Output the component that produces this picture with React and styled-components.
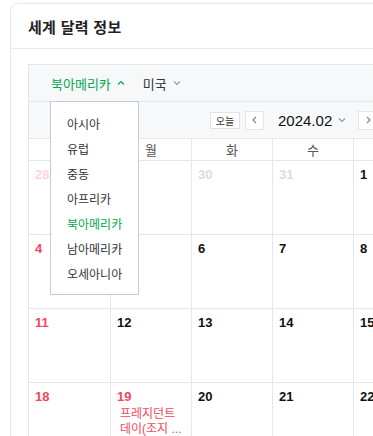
import React from "react";
import styled, { createGlobalStyle } from "styled-components";

const GlobalStyle = createGlobalStyle`
  html, body {
    margin: 0;
    padding: 0;
    background: #fff;
    overflow: hidden;
    font-family: "Liberation Sans", "Noto Sans CJK KR", sans-serif;
  }
`;

const Page = styled.div`
  width: 373px;
  height: 436px;
  padding: 3px 0 0 10px;
  box-sizing: border-box;
  overflow: hidden;
`;

const Card = styled.div`
  width: 420px;
  height: 460px;
  border: 1px solid #e5e6eb;
  border-radius: 8px;
  background: #fff;
  box-sizing: border-box;
`;

const CardHeader = styled.div`
  height: 45px;
  display: flex;
  align-items: center;
  padding-left: 17px;
  border-bottom: 1px solid #e9ebf0;
  box-sizing: border-box;
`;

const Title = styled.h2`
  margin: 0;
  font-size: 15px;
  font-weight: 700;
  color: #1d2129;
  letter-spacing: 0.3px;
`;

const CardBody = styled.div`
  padding: 15px 0 0 17px;
`;

const Calendar = styled.div`
  position: relative;
  border: 1px solid #e5e6eb;
  border-right: none;
  width: 600px;
`;

const RegionBar = styled.div`
  height: 36px;
  display: flex;
  align-items: center;
  gap: 18px;
  padding-left: 22px;
  background: #f7f8fa;
  border-bottom: 1px solid #e5e6eb;
`;

const RegionTab = styled.div`
  display: flex;
  align-items: center;
  gap: 6px;
  font-size: 13px;
  color: ${(p) => (p.$active ? "#00a84f" : "#333")};
`;

const DateBar = styled.div`
  height: 36px;
  display: flex;
  align-items: center;
  padding-left: 181px;
  background: #f7f8fa;
  border-bottom: 1px solid #e5e6eb;
`;

const TodayButton = styled.div`
  width: 30px;
  height: 17px;
  border: 1px solid #e0e2e7;
  background: #fff;
  font-size: 10px;
  color: #333;
  display: flex;
  align-items: center;
  justify-content: center;
  box-sizing: border-box;
  margin-right: 5px;
`;

const ArrowButton = styled.div`
  width: 19px;
  height: 19px;
  border: 1px solid #e5e6eb;
  background: #fff;
  display: flex;
  align-items: center;
  justify-content: center;
  box-sizing: border-box;
`;

const MonthLabel = styled.div`
  display: flex;
  align-items: center;
  gap: 6px;
  margin: 0 12px 0 14px;
  font-size: 15px;
  color: #111;
`;

const WeekHeader = styled.div`
  display: grid;
  grid-template-columns: repeat(7, 81px);
  height: 21px;
  border-bottom: 1px solid #e5e6eb;
`;

const WeekDay = styled.div`
  display: flex;
  align-items: center;
  justify-content: center;
  font-size: 13px;
  color: #555;
  border-left: ${(p) => (p.$first ? "none" : "1px solid #e5e6eb")};
`;

const Week = styled.div`
  display: grid;
  grid-template-columns: repeat(7, 81px);
  height: 73px;
  border-bottom: 1px solid #e5e6eb;
`;

const Day = styled.div`
  padding: 6px 0 0 6px;
  border-left: ${(p) => (p.$first ? "none" : "1px solid #e5e6eb")};
  box-sizing: border-box;
`;

const DayNum = styled.div`
  font-size: 13px;
  font-weight: 700;
  line-height: 16px;
  color: ${(p) => p.$color};
`;

const Event = styled.div`
  margin: 2px 0 0 3px;
  width: 64px;
  font-size: 12px;
  line-height: 15px;
  color: #f5475b;
`;

const Dropdown = styled.ul`
  position: absolute;
  left: 21px;
  top: 36px;
  width: 89px;
  margin: 0;
  padding: 9px 0 8px;
  list-style: none;
  background: #fff;
  border: 1px solid #c0cad8;
  box-sizing: border-box;
  z-index: 2;
`;

const DropItem = styled.li`
  height: 25px;
  display: flex;
  align-items: center;
  padding-left: 16px;
  font-size: 12px;
  color: ${(p) => (p.$active ? "#00a84f" : "#333")};
`;

function Chevron({ dir = "down", color = "#999", size = 8 }) {
  const pts = {
    down: "1,2.5 4,5.5 7,2.5",
    up: "1,5.5 4,2.5 7,5.5",
    left: "5,1 2,4 5,7",
    right: "3,1 6,4 3,7",
  }[dir];
  return (
    <svg width={size} height={size} viewBox="0 0 8 8">
      <polyline points={pts} fill="none" stroke={color} strokeWidth="1.2" />
    </svg>
  );
}

const RED = "#f5475b";
const INK = "#111";

const weeks = [
  [
    { n: 28, c: "#ffd6da" },
    { n: 29, c: "#dcdcdc" },
    { n: 30, c: "#dcdcdc" },
    { n: 31, c: "#dcdcdc" },
    { n: 1, c: INK },
    { n: 2, c: INK },
    { n: 3, c: INK },
  ],
  [4, 5, 6, 7, 8, 9, 10].map((n, i) => ({ n, c: i === 0 ? RED : INK })),
  [11, 12, 13, 14, 15, 16, 17].map((n, i) => ({ n, c: i === 0 ? RED : INK })),
  [18, 19, 20, 21, 22, 23, 24].map((n, i) => ({
    n,
    c: i === 0 || i === 1 ? RED : INK,
    ev: i === 1 ? "프레지던트 데이(조지 ..." : null,
  })),
];

const regions = ["아시아", "유럽", "중동", "아프리카", "북아메리카", "남아메리카", "오세아니아"];
const days = ["일", "월", "화", "수", "목", "금", "토"];

export default function App() {
  return (
    <>
      <GlobalStyle />
      <Page>
        <Card>
          <CardHeader>
            <Title>세계 달력 정보</Title>
          </CardHeader>
          <CardBody>
            <Calendar>
              <RegionBar>
                <RegionTab $active>
                  북아메리카 <Chevron dir="up" color="#00a84f" />
                </RegionTab>
                <RegionTab>
                  미국 <Chevron dir="down" color="#999" />
                </RegionTab>
              </RegionBar>
              <DateBar>
                <TodayButton>오늘</TodayButton>
                <ArrowButton>
                  <Chevron dir="left" color="#888" />
                </ArrowButton>
                <MonthLabel>
                  2024.02 <Chevron dir="down" color="#999" />
                </MonthLabel>
                <ArrowButton>
                  <Chevron dir="right" color="#888" />
                </ArrowButton>
              </DateBar>
              <WeekHeader>
                {days.map((d, i) => (
                  <WeekDay key={d} $first={i === 0}>
                    {d}
                  </WeekDay>
                ))}
              </WeekHeader>
              {weeks.map((w, wi) => (
                <Week key={wi}>
                  {w.map((d, i) => (
                    <Day key={i} $first={i === 0}>
                      <DayNum $color={d.c}>{d.n}</DayNum>
                      {d.ev && <Event>{d.ev}</Event>}
                    </Day>
                  ))}
                </Week>
              ))}
              <Dropdown>
                {regions.map((r) => (
                  <DropItem key={r} $active={r === "북아메리카"}>
                    {r}
                  </DropItem>
                ))}
              </Dropdown>
            </Calendar>
          </CardBody>
        </Card>
      </Page>
    </>
  );
}
